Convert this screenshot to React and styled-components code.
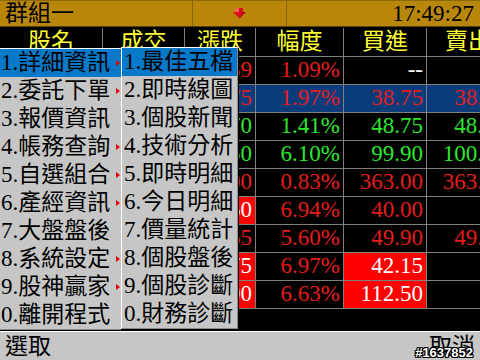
import React from "react";
import styled, { createGlobalStyle } from "styled-components";

const GlobalStyle = createGlobalStyle`
  html, body {
    margin: 0;
    padding: 0;
    background: #000;
  }
  body {
    width: 480px;
    height: 360px;
    overflow: hidden;
  }
`;

const FONT = `"Liberation Serif", "Noto Sans CJK TC", serif`;
const COLS = "103px 82px 71px 88px 83px 83px";

const RED = "#e41c1c";
const GREEN = "#2ee62e";
const WHITE = "#ffffff";

const Screen = styled.div`
  position: relative;
  width: 480px;
  height: 360px;
  background: #000;
  overflow: hidden;
  display: flex;
  flex-direction: column;
  font-family: ${FONT};
  font-size: 23px;
`;

const TopBar = styled.div`
  display: grid;
  grid-template-columns: 193px 94px 1fr;
  height: 27px;
  box-sizing: border-box;
  background: #b8860b;
  border-top: 1px solid #8c6a08;
  border-bottom: 1px solid #5a4200;
`;

const TopCell = styled.div`
  display: flex;
  align-items: center;
  justify-content: ${(p) => p.$align || "flex-start"};
  padding: 0 6px 0 5px;
  color: #000;
  line-height: 1;
  border-right: ${(p) => (p.$last ? "none" : "1px solid #86650a")};
`;

const Board = styled.div`
  flex: 1;
  padding-top: 1px;
  overflow: hidden;
`;

const Row = styled.div`
  display: grid;
  grid-template-columns: ${COLS};
  width: 510px;
  height: ${(p) => p.$h || 28}px;
  background: ${(p) => p.$bg || "transparent"};
`;

const HeadCell = styled.div`
  display: flex;
  align-items: center;
  justify-content: center;
  box-sizing: border-box;
  color: #ffff33;
  line-height: 1;
  padding-bottom: 2px;
  border-right: 1px solid #7f7f7f;
  border-bottom: 1px solid #7f7f7f;
`;

const Cell = styled.div`
  display: flex;
  align-items: center;
  justify-content: flex-end;
  box-sizing: border-box;
  padding: 0 3px 3px 0;
  color: ${(p) => p.$color || WHITE};
  background: ${(p) => p.$bg || "transparent"};
  white-space: nowrap;
  line-height: 1;
  border-right: 1px solid #7f7f7f;
  border-bottom: 1px solid #7f7f7f;
`;

const Menu = styled.ul`
  position: absolute;
  top: ${(p) => p.$top}px;
  left: ${(p) => p.$left}px;
  width: ${(p) => p.$width}px;
  margin: 0;
  padding: 0;
  list-style: none;
  box-sizing: border-box;
  background: #c6c6c6;
  border-top: 1px solid #ffffff;
  border-left: ${(p) => (p.$sub ? "1px solid #ffffff" : "none")};
  border-right: ${(p) => (p.$sub ? "1px solid #8a8a8a" : "none")};
  border-bottom: 1px solid #8a8a8a;
  box-shadow: ${(p) => (p.$sub ? "1px 1px 0 #000" : "none")};
`;

const MenuItem = styled.li`
  display: flex;
  align-items: center;
  justify-content: space-between;
  height: 28px;
  padding-left: ${(p) => (p.$sub ? 2 : 1)}px;
  color: #000;
  line-height: 28px;
  white-space: nowrap;
  background: ${(p) => (p.$active ? "#0878c8" : "transparent")};
`;

const SubArrow = styled.span`
  width: 0;
  height: 0;
  margin-right: 1px;
  border-top: 3px solid transparent;
  border-bottom: 3px solid transparent;
  border-left: 4px solid #e00000;
`;

const BottomBar = styled.div`
  position: relative;
  display: flex;
  align-items: center;
  justify-content: space-between;
  height: 29px;
  box-sizing: border-box;
  padding: 0 5px 0 5px;
  background: #c6c6c6;
  border-top: 1px solid #ffffff;
  color: #000;
  line-height: 1;
`;

const Stamp = styled.span`
  position: absolute;
  right: 7px;
  bottom: 1px;
  font-family: "Liberation Sans", sans-serif;
  font-weight: bold;
  font-size: 13px;
  line-height: 13px;
  color: #fff;
  text-shadow: 1px 0 0 #000, -1px 0 0 #000, 0 1px 0 #000, 0 -1px 0 #000,
    1px 1px 0 #000, -1px -1px 0 #000, 1px -1px 0 #000, -1px 1px 0 #000;
`;

const DownArrow = () => (
  <svg width="13" height="11" viewBox="0 0 13 11">
    <polygon points="3,0 10,0 10,4 13,4 6.5,10.5 0,4 3,4" fill="#d8101a" />
    <polygon points="3,0 6,0 6,4 2,4" fill="#ff5a5a" />
    <polygon points="6.5,10.5 10,6 13,4 10,4" fill="#a0000a" />
  </svg>
);

const headers = ["股名", "成交", "漲跌", "幅度", "買進", "賣出"];

// 股名、成交兩欄被選單蓋住，不填
// 顏色: r 紅, g 綠, w 白, R 紅底白字
const rows = [
  { id: 1, chg: ["0.39", "r"], pct: ["1.09%", "r"], bid: ["--", "w"], ask: ["", "r"] },
  { id: 2, chg: ["0.75", "r"], pct: ["1.97%", "r"], bid: ["38.75", "r"], ask: ["38.80", "r"], sel: true },
  { id: 3, chg: ["0.70", "g"], pct: ["1.41%", "g"], bid: ["48.75", "g"], ask: ["48.80", "g"] },
  { id: 4, chg: ["6.50", "g"], pct: ["6.10%", "g"], bid: ["99.90", "g"], ask: ["100.00", "g"] },
  { id: 5, chg: ["3.00", "r"], pct: ["0.83%", "r"], bid: ["363.00", "r"], ask: ["363.50", "r"] },
  { id: 6, chg: ["2.60", "R"], pct: ["6.94%", "r"], bid: ["40.00", "r"], ask: ["", "r"] },
  { id: 7, chg: ["2.65", "r"], pct: ["5.60%", "r"], bid: ["49.90", "r"], ask: ["49.95", "r"] },
  { id: 8, chg: ["2.75", "R"], pct: ["6.97%", "r"], bid: ["42.15", "R"], ask: ["", "r"] },
  { id: 9, chg: ["7.00", "R"], pct: ["6.63%", "r"], bid: ["112.50", "R"], ask: ["", "r"] },
];

const tone = (t) => {
  if (t === "g") return { $color: GREEN };
  if (t === "w") return { $color: WHITE };
  if (t === "R") return { $color: WHITE, $bg: "#ff0000" };
  return { $color: RED };
};

const mainMenu = [
  ["1.詳細資訊", true],
  ["2.委託下單", true],
  ["3.報價資訊", false],
  ["4.帳務查詢", true],
  ["5.自選組合", true],
  ["6.產經資訊", true],
  ["7.大盤盤後", false],
  ["8.系統設定", true],
  ["9.股神贏家", true],
  ["0.離開程式", false],
];

const subMenu = [
  "1.最佳五檔",
  "2.即時線圖",
  "3.個股新聞",
  "4.技術分析",
  "5.即時明細",
  "6.今日明細",
  "7.價量統計",
  "8.個股盤後",
  "9.個股診斷",
  "0.財務診斷",
];

const App = () => {
  return (
    <>
      <GlobalStyle />
      <Screen>
        <TopBar>
          <TopCell>群組一</TopCell>
          <TopCell $align="center">
            <DownArrow />
          </TopCell>
          <TopCell $align="flex-end" $last>
            17:49:27
          </TopCell>
        </TopBar>

        <Board>
          <Row $h={29}>
            {headers.map((h) => (
              <HeadCell key={h}>{h}</HeadCell>
            ))}
          </Row>
          {rows.map((r) => (
            <Row key={r.id} $bg={r.sel ? "#0a3c7c" : undefined}>
              <Cell />
              <Cell />
              <Cell {...tone(r.chg[1])}>{r.chg[0]}</Cell>
              <Cell {...tone(r.pct[1])}>{r.pct[0]}</Cell>
              <Cell {...tone(r.bid[1])}>{r.bid[0]}</Cell>
              <Cell {...tone(r.ask[1])}>{r.ask[0]}</Cell>
            </Row>
          ))}
        </Board>

        <BottomBar>
          <span>選取</span>
          <span>取消</span>
          <Stamp>#1637852</Stamp>
        </BottomBar>

        <Menu $top={48} $left={0} $width={121}>
          {mainMenu.map(([label, hasSub], i) => (
            <MenuItem key={label} $active={i === 0}>
              <span>{label}</span>
              {hasSub && <SubArrow />}
            </MenuItem>
          ))}
        </Menu>

        <Menu $top={47} $left={121} $width={117} $sub>
          {subMenu.map((label, i) => (
            <MenuItem key={label} $sub $active={i === 0}>
              {label}
            </MenuItem>
          ))}
        </Menu>
      </Screen>
    </>
  );
};

export default App;
